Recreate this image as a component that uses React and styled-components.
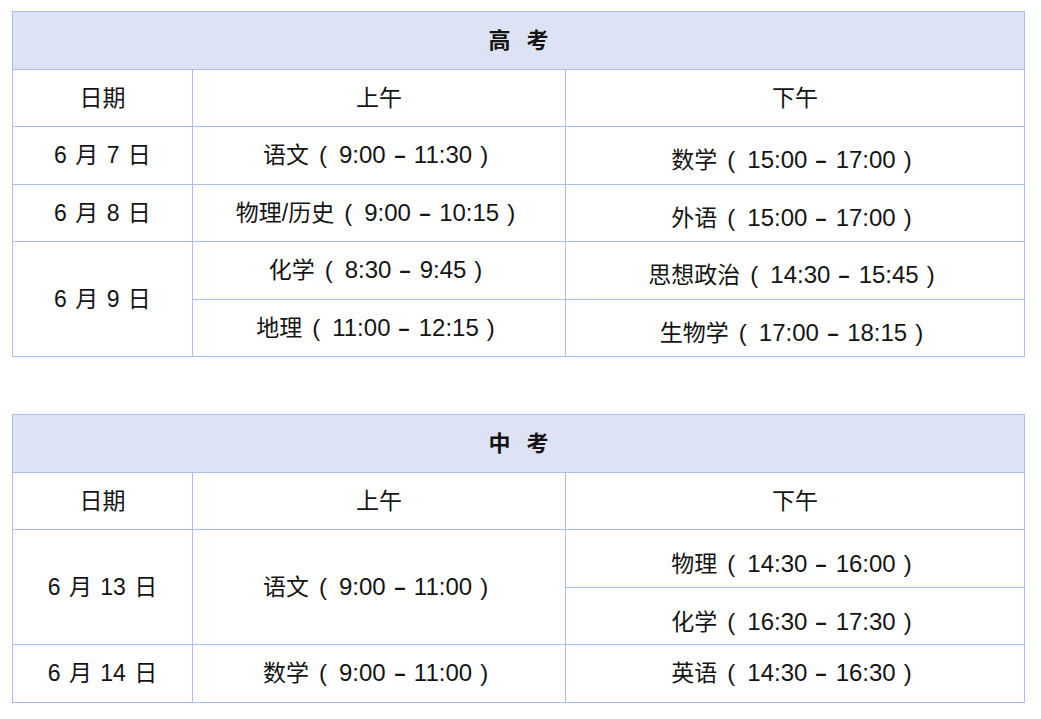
import React from "react";
import styled, { createGlobalStyle } from "styled-components";

const Global = createGlobalStyle`
  html, body { margin: 0; padding: 0; background: #ffffff; }
  body { font-family: "Liberation Sans", "Noto Sans CJK SC", sans-serif; color: #141414; }
`;

const Page = styled.div`
  display: flex;
  flex-direction: column;
  gap: 57px;
  padding: 11px 0 0 12px;
  width: 1012px;
`;

const Table = styled.table`
  border-collapse: collapse;
  width: 1012px;
  table-layout: fixed;
  font-size: 23px;
  word-spacing: 2px;
`;

const TitleCell = styled.th`
  background: #dde3f5;
  border: 1px solid #a9c1ec;
  height: 52px;
  padding: 0 0 5px 0;
  font-weight: 700;
  font-size: 22px;
  text-align: center;
`;

const Row = styled.tr`
  height: ${(p) => p.$h || 57.5}px;
`;

const Cell = styled.td`
  border: 1px solid #a9c1ec;
  padding: ${(p) => (p.$shift ? p.$shift * 2 : 0)}px 0 5px 0;
  text-align: center;
  vertical-align: middle;
  font-weight: 400;
  white-space: nowrap;
`;

const TimeText = styled.span`
  display: inline-block;
  padding-right: 7px;
`;

const Subject = styled.span`
  font-size: 23px;
`;

const Paren = styled.span`
  display: inline-block;
  font-size: 24px;
  margin: ${(p) => (p.$open ? "0 12px 0 10px" : "0 0 0 8px")};
`;

const Num = styled.span`
  font-size: 24px;
`;

const Dash = styled.span`
  display: inline-block;
  font-size: 22px;
  font-weight: 700;
  transform: scaleX(0.9);
  margin: 0 8px;
`;

function Time({ subject, from, to }) {
  return (
    <TimeText>
      <Subject>{subject}</Subject>
      <Paren $open>(</Paren>
      <Num>{from}</Num>
      <Dash>–</Dash>
      <Num>{to}</Num>
      <Paren>)</Paren>
    </TimeText>
  );
}

const cols = (
  <colgroup>
    <col style={{ width: 180 }} />
    <col style={{ width: 373 }} />
    <col style={{ width: 459 }} />
  </colgroup>
);

export default function App() {
  return (
    <>
      <Global />
      <Page>
        <Table>
          {cols}
          <thead>
            <tr>
              <TitleCell colSpan={3}>高&nbsp;&nbsp;考</TitleCell>
            </tr>
          </thead>
          <tbody>
            <Row $h={57}>
              <Cell>日期</Cell>
              <Cell>上午</Cell>
              <Cell>下午</Cell>
            </Row>
            <Row $h={58}>
              <Cell>6 月 7 日</Cell>
              <Cell><Time subject="语文" from="9:00" to="11:30" /></Cell>
              <Cell $shift={5}><Time subject="数学" from="15:00" to="17:00" /></Cell>
            </Row>
            <Row $h={57}>
              <Cell>6 月 8 日</Cell>
              <Cell><Time subject="物理/历史" from="9:00" to="10:15" /></Cell>
              <Cell $shift={5}><Time subject="外语" from="15:00" to="17:00" /></Cell>
            </Row>
            <Row $h={58}>
              <Cell rowSpan={2}>6 月 9 日</Cell>
              <Cell><Time subject="化学" from="8:30" to="9:45" /></Cell>
              <Cell $shift={5}><Time subject="思想政治" from="14:30" to="15:45" /></Cell>
            </Row>
            <Row $h={57}>
              <Cell><Time subject="地理" from="11:00" to="12:15" /></Cell>
              <Cell $shift={5}><Time subject="生物学" from="17:00" to="18:15" /></Cell>
            </Row>
          </tbody>
        </Table>

        <Table>
          {cols}
          <thead>
            <tr>
              <TitleCell colSpan={3}>中&nbsp;&nbsp;考</TitleCell>
            </tr>
          </thead>
          <tbody>
            <Row $h={57}>
              <Cell>日期</Cell>
              <Cell>上午</Cell>
              <Cell>下午</Cell>
            </Row>
            <Row $h={58}>
              <Cell rowSpan={2}>6 月 13 日</Cell>
              <Cell rowSpan={2}><Time subject="语文" from="9:00" to="11:00" /></Cell>
              <Cell $shift={6}><Time subject="物理" from="14:30" to="16:00" /></Cell>
            </Row>
            <Row $h={57}>
              <Cell $shift={6}><Time subject="化学" from="16:30" to="17:30" /></Cell>
            </Row>
            <Row $h={58}>
              <Cell>6 月 14 日</Cell>
              <Cell><Time subject="数学" from="9:00" to="11:00" /></Cell>
              <Cell><Time subject="英语" from="14:30" to="16:30" /></Cell>
            </Row>
          </tbody>
        </Table>
      </Page>
    </>
  );
}
